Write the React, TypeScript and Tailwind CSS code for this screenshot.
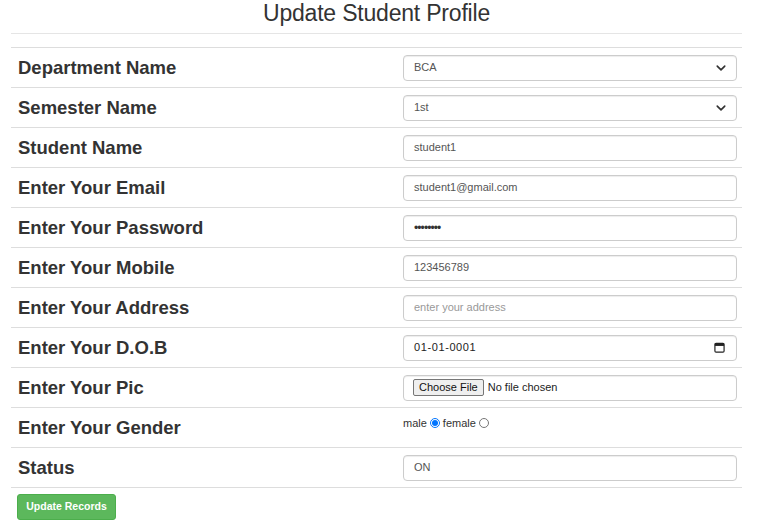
import React from "react";

const inputBox =
  "h-[26px] w-full rounded-[4px] border border-[#cccccc] bg-white shadow-[inset_0_1px_1px_rgba(0,0,0,0.075)] flex items-center px-[10px] text-[11px] text-[#555555]";

function Chevron() {
  return (
    <svg width="10" height="10" viewBox="0 0 16 16" className="ml-auto">
      <path d="M2 5l6 6 6-6" fill="none" stroke="#333" strokeWidth="2.6" strokeLinecap="round" strokeLinejoin="round" />
    </svg>
  );
}

function Calendar() {
  return (
    <svg width="11" height="11" viewBox="0 0 12 12" className="ml-auto mr-[1px]">
      <rect x="1" y="1.5" width="10" height="9.5" rx="1.2" fill="none" stroke="#222" strokeWidth="1.3" />
      <rect x="1" y="1.5" width="10" height="2.8" fill="#222" />
    </svg>
  );
}

type Row = { label: string; field: React.ReactNode };

const rows: Row[] = [
  { label: "Department Name", field: <div className={inputBox}>BCA<Chevron /></div> },
  { label: "Semester Name", field: <div className={inputBox}>1st<Chevron /></div> },
  { label: "Student Name", field: <div className={inputBox}>student1</div> },
  { label: "Enter Your Email", field: <div className={inputBox}>student1@gmail.com</div> },
  {
    label: "Enter Your Password",
    field: <div className={inputBox}><span className="text-[12px] tracking-[-0.9px] text-[#333]">••••••••</span></div>,
  },
  { label: "Enter Your Mobile", field: <div className={inputBox}>123456789</div> },
  {
    label: "Enter Your Address",
    field: <div className={inputBox}><span className="text-[#999999]">enter your address</span></div>,
  },
  {
    label: "Enter Your D.O.B",
    field: (
      <div className={inputBox}>
        <span className="tracking-[0.6px] text-[#222]">01-01-0001</span>
        <Calendar />
      </div>
    ),
  },
  {
    label: "Enter Your Pic",
    field: (
      <div className={inputBox + " !px-[9px]"}>
        <span className="h-[17px] px-[5px] flex items-center border border-[#767676] rounded-[2px] bg-[#efefef] text-[11px] text-[#111]">
          Choose File
        </span>
        <span className="ml-[4px] text-[#222]">No file chosen</span>
      </div>
    ),
  },
  {
    label: "Enter Your Gender",
    field: (
      <div className="h-[26px] flex items-center text-[11px] text-[#333] -mt-[9px]">
        male
        <input type="radio" name="g" defaultChecked className="w-[10px] h-[10px] mx-[3px]" />
        female
        <input type="radio" name="g" className="w-[10px] h-[10px] mx-[3px]" />
      </div>
    ),
  },
  { label: "Status", field: <div className={inputBox}>ON</div> },
];

export default function App() {
  return (
    <div className="w-[758px] h-[528px] bg-white font-['Liberation_Sans',Arial,sans-serif] text-[#333333]">
      <div className="px-[11px]">
        <h1 className="w-[731px] text-center text-[23px] leading-[26px] h-[34px] border-b border-[#e5e5e5] tracking-[-0.2px]">
          Update Student Profile
        </h1>
        <div className="mt-[13px] w-[731px] border-b border-[#dddddd]">
          {rows.map((r) => (
            <div key={r.label} className="h-[40px] border-t border-[#dddddd] flex items-center">
              <div className="w-[384px] pl-[7px] text-[18.5px] font-bold text-[#333333]">{r.label}</div>
              <div className="flex-1 pl-[8px] pr-[5px]">{r.field}</div>
            </div>
          ))}
        </div>
        <button className="mt-[6px] ml-[6px] h-[26px] w-[99px] rounded-[3px] bg-[#5cb85c] border border-[#4cae4c] text-white text-[10.5px] font-bold">
          Update Records
        </button>
      </div>
    </div>
  );
}
